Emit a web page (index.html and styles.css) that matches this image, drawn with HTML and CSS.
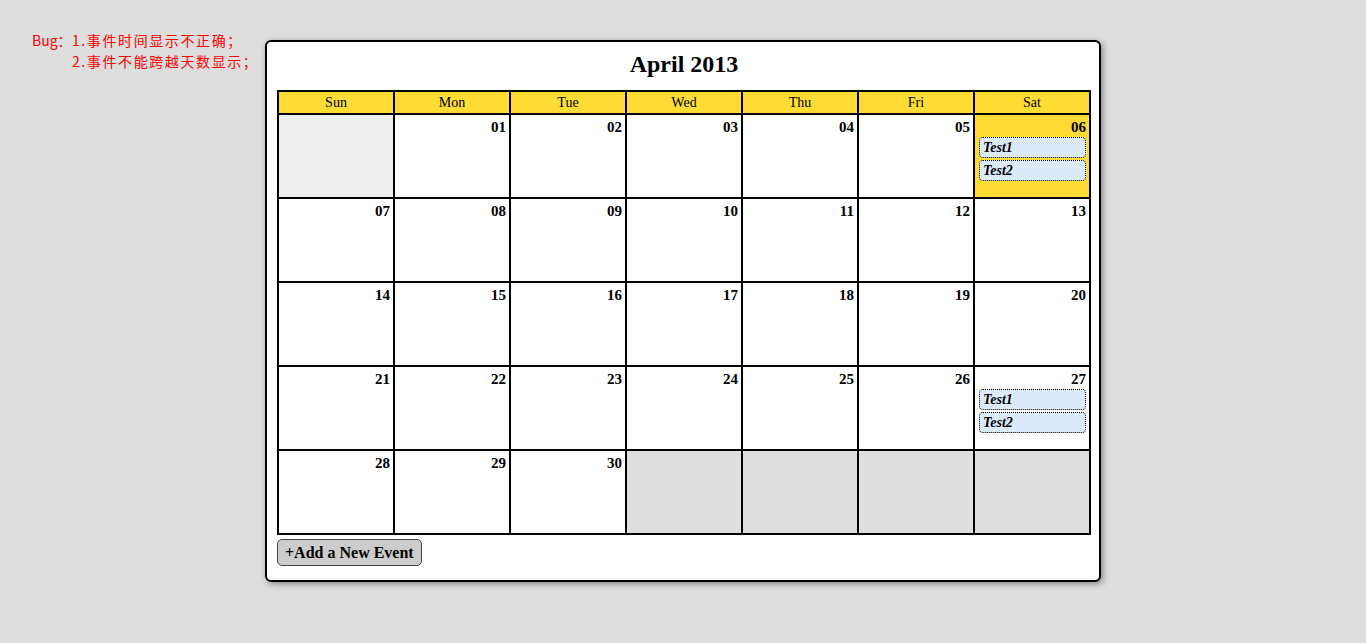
FILE: index.html
```html
<!DOCTYPE html>
<html lang="zh">
<head>
<meta charset="utf-8">
<title>Calendar</title>
<link rel="stylesheet" href="styles.css">
</head>
<body>
<div class="bug-note">
  <span class="bug-label">Bug：</span>
  <div class="bug-list">
    <div class="bug-line">1.事件时间显示不正确；</div>
    <div class="bug-line">2.事件不能跨越天数显示；</div>
  </div>
</div>
<div class="calendar">
  <h1 class="title">April 2013</h1>
  <div class="grid">
    <div class="head">Sun</div><div class="head">Mon</div><div class="head">Tue</div><div class="head">Wed</div><div class="head">Thu</div><div class="head">Fri</div><div class="head">Sat</div>

    <div class="cell blank-light"></div>
    <div class="cell"><span class="num">01</span></div>
    <div class="cell"><span class="num">02</span></div>
    <div class="cell"><span class="num">03</span></div>
    <div class="cell"><span class="num">04</span></div>
    <div class="cell"><span class="num">05</span></div>
    <div class="cell today"><span class="num">06</span><div class="event">Test1</div><div class="event">Test2</div></div>

    <div class="cell"><span class="num">07</span></div>
    <div class="cell"><span class="num">08</span></div>
    <div class="cell"><span class="num">09</span></div>
    <div class="cell"><span class="num">10</span></div>
    <div class="cell"><span class="num">11</span></div>
    <div class="cell"><span class="num">12</span></div>
    <div class="cell"><span class="num">13</span></div>

    <div class="cell"><span class="num">14</span></div>
    <div class="cell"><span class="num">15</span></div>
    <div class="cell"><span class="num">16</span></div>
    <div class="cell"><span class="num">17</span></div>
    <div class="cell"><span class="num">18</span></div>
    <div class="cell"><span class="num">19</span></div>
    <div class="cell"><span class="num">20</span></div>

    <div class="cell"><span class="num">21</span></div>
    <div class="cell"><span class="num">22</span></div>
    <div class="cell"><span class="num">23</span></div>
    <div class="cell"><span class="num">24</span></div>
    <div class="cell"><span class="num">25</span></div>
    <div class="cell"><span class="num">26</span></div>
    <div class="cell"><span class="num">27</span><div class="event">Test1</div><div class="event">Test2</div></div>

    <div class="cell"><span class="num">28</span></div>
    <div class="cell"><span class="num">29</span></div>
    <div class="cell"><span class="num">30</span></div>
    <div class="cell blank"></div>
    <div class="cell blank"></div>
    <div class="cell blank"></div>
    <div class="cell blank"></div>
  </div>
  <button class="add-btn" type="button">+Add a New Event</button>
</div>
</body>
</html>
```
FILE: styles.css
```css
html, body {
  margin: 0;
  padding: 0;
}
body {
  background: #dedede;
  font-family: "Liberation Serif", "DejaVu Serif", serif;
  color: #000;
  padding-top: 40px;
  height: 603px;
}
.bug-note {
  position: absolute;
  left: 32px;
  top: 30px;
  display: flex;
  color: #ff0000;
  font-family: "Noto Sans CJK SC", sans-serif;
  font-size: 14px;
  line-height: 21px;
}
.bug-label {
  width: 40px;
}
.bug-line {
  letter-spacing: 1.6px;
  height: 21px;
}
.calendar {
  margin: 0 auto;
  background: #fff;
  border: 2px solid #000;
  border-radius: 6px;
  box-shadow: 2px 2px 6px #888;
  padding: 0 8px 14px 10px;
  box-sizing: border-box;
  width: 836px;
}
.title {
  margin: 0 0 4px;
  font-size: 24px;
  line-height: 44px;
  font-weight: bold;
  text-align: center;
}
.grid {
  width: 814px;
  box-sizing: border-box;
  display: grid;
  grid-template-columns: repeat(7, 114px);
  grid-template-rows: 21px repeat(5, 82px);
  gap: 2px;
  padding: 2px;
  background: #000;
}
.head {
  background: #fedc33;
  text-align: center;
  font-size: 14px;
  line-height: 22px;
}
.cell {
  background: #fff;
  display: flex;
  flex-direction: column;
  padding: 0 3px 0 4px;
}
.cell.blank-light {
  background: #efefef;
}
.cell.blank {
  background: #dedede;
}
.cell.today {
  background: #fedc33;
}
.num {
  align-self: flex-end;
  font-weight: bold;
  font-size: 15px;
  line-height: 18px;
  padding-top: 3px;
}
.event {
  margin-top: 2px;
  height: 19px;
  background: #dcebfc;
  border: 1px dotted #000;
  border-radius: 4px;
  font-weight: bold;
  font-style: italic;
  font-size: 14px;
  line-height: 19px;
  padding-left: 3px;
}
.num + .event {
  margin-top: 1px;
}
.add-btn {
  display: block;
  margin-top: 4px;
  height: 27px;
  padding: 0 7px;
  background: #cccccc;
  border: 1px solid #444;
  border-radius: 5px;
  font-family: "Liberation Serif", "DejaVu Serif", serif;
  font-weight: bold;
  font-size: 16px;
  color: #000;
}
```
